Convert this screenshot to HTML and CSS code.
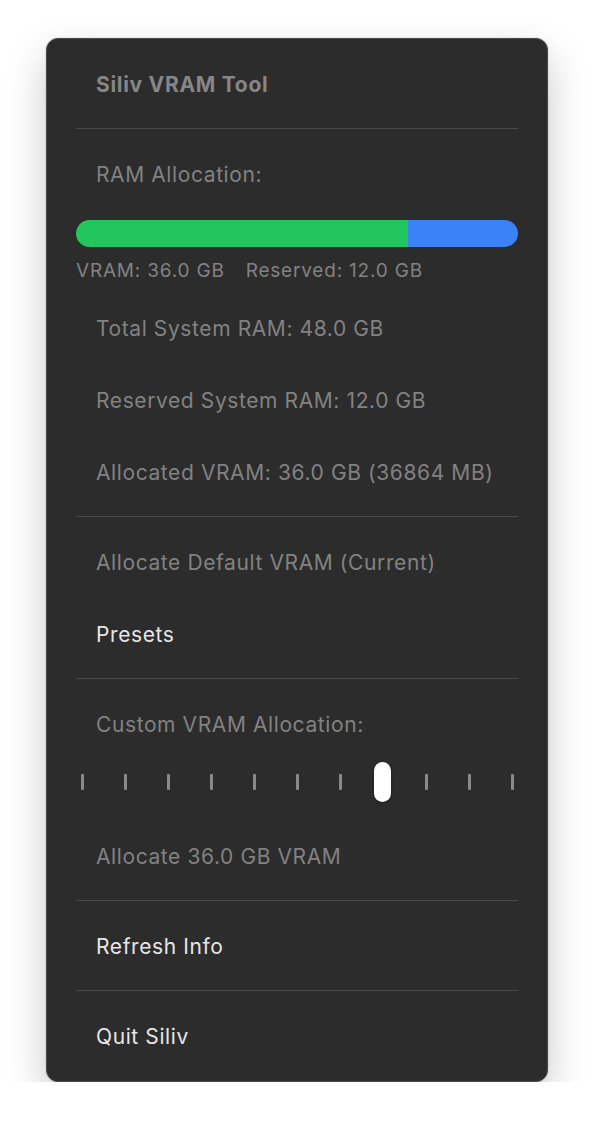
FILE: index.html
```html
<!DOCTYPE html>
<html lang="en">
<head>
    <meta charset="UTF-8">
    <meta name="viewport" content="width=device-width, initial-scale=1.0">
    <title>Siliv VRAM Tool</title>

    <link rel="stylesheet" href="styles.css">
</head>
<body>
    <div class="menu">
        <div class="item title">Siliv VRAM Tool</div>
        <div class="sep"></div>

        <div class="item muted">RAM Allocation:</div>
        <div class="bar">
            <div class="bar-vram" style="width: 75%"></div>
            <div class="bar-reserved"></div>
        </div>
        <div class="bar-legend">
            <span>VRAM: 36.0 GB</span>
            <span>Reserved: 12.0 GB</span>
        </div>
        <div class="item muted">Total System RAM: 48.0 GB</div>
        <div class="item muted">Reserved System RAM: 12.0 GB</div>
        <div class="item muted">Allocated VRAM: 36.0 GB (36864 MB)</div>
        <div class="sep"></div>

        <div class="item muted">Allocate Default VRAM (Current)</div>
        <div class="item">Presets</div>
        <div class="sep"></div>

        <div class="item muted">Custom VRAM Allocation:</div>
        <div class="slider">
            <span class="tick"></span>
            <span class="tick"></span>
            <span class="tick"></span>
            <span class="tick"></span>
            <span class="tick"></span>
            <span class="tick"></span>
            <span class="tick"></span>
            <span class="thumb"></span>
            <span class="tick"></span>
            <span class="tick"></span>
            <span class="tick"></span>
        </div>
        <div class="item muted">Allocate 36.0 GB VRAM</div>
        <div class="sep"></div>

        <div class="item">Refresh Info</div>
        <div class="sep"></div>

        <div class="item">Quit Siliv</div>
    </div>
</body>
</html>
```

FILE: styles.css
```css
*{
    box-sizing: border-box;
}

body {
    margin: 0;
    background-color: #ffffff;
    font-family: Inter, "Open Sans", Arial, sans-serif;
}

.menu {
    width: 502px;
    margin: 38px 0 0 46px;
    padding: 9px 0 9px;
    background-color: #2c2c2c;
    border: 1px solid #4a4a4a;
    border-radius: 12px;
    box-shadow: 0 18px 40px rgba(0, 0, 0, 0.22), 0 0 2px rgba(0, 0, 0, 0.2);
    display: flex;
    flex-direction: column;
}

.item {
    height: 72px;
    padding-left: 49px;
    display: flex;
    align-items: center;
    font-size: 21px;
    letter-spacing: 0.6px;
    color: #e6e6e6;
}

.item.muted {
    color: #828282;
}

.title {
    font-weight: 700;
    letter-spacing: 0.7px;
    color: #868686;
}

.sep {
    height: 1px;
    margin: 8px 29px 9px;
    background-color: #4a4a4a;
}

.bar {
    height: 27px;
    margin: 10px 29px 0;
    border-radius: 14px;
    overflow: hidden;
    display: flex;
}

.bar-vram {
    background-color: #22c55e;
}

.bar-reserved {
    flex: 1;
    background-color: #3b82f6;
}

.bar-legend {
    margin: 12px 29px 10px;
    display: flex;
    gap: 21px;
    font-size: 19px;
    letter-spacing: 0.8px;
    color: #828282;
}

.slider {
    height: 40px;
    margin: 2px 13px 18px 14px;
    display: grid;
    grid-template-columns: repeat(11, 1fr);
    justify-items: center;
    align-items: center;
}

.tick {
    width: 3px;
    height: 16px;
    border-radius: 1px;
    background-color: #8a8a8a;
}

.thumb {
    width: 17px;
    height: 40px;
    margin-right: 3px;
    border-radius: 9px;
    background-color: #ffffff;
    box-shadow: 0 1px 3px rgba(0, 0, 0, 0.4);
}
```
